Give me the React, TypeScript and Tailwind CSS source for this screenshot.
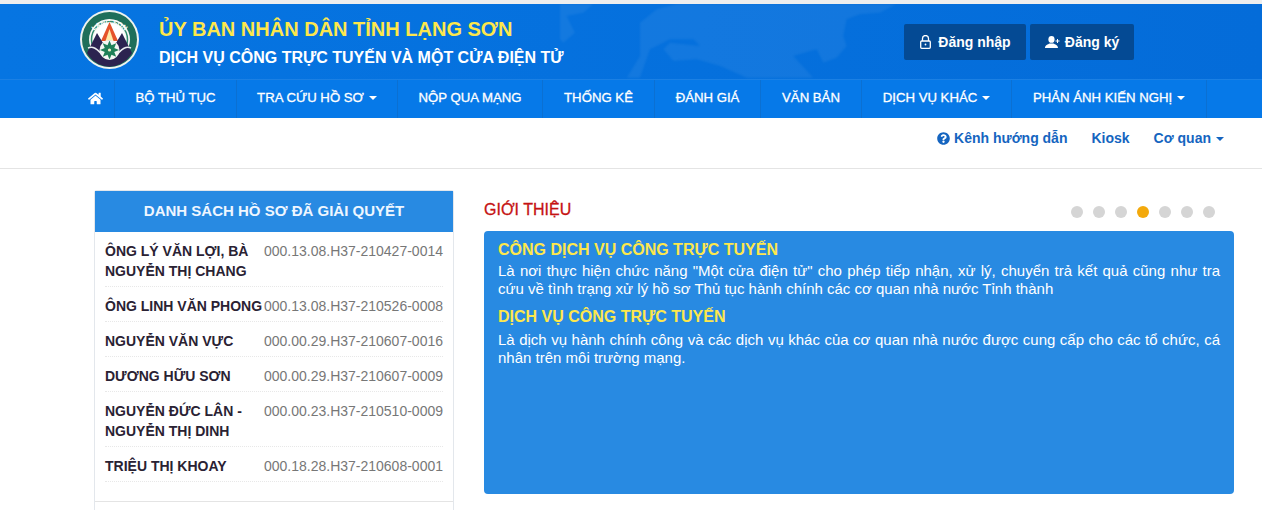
import { FaHome, FaQuestionCircle } from "react-icons/fa";

const navItems = [
  { label: "BỘ THỦ TỤC", w: "w-[122px]" },
  { label: "TRA CỨU HỒ SƠ", caret: true, w: "w-[161px]" },
  { label: "NỘP QUA MẠNG", w: "w-[145px]" },
  { label: "THỐNG KÊ", w: "w-[112px]" },
  { label: "ĐÁNH GIÁ", w: "w-[106px]" },
  { label: "VĂN BẢN", w: "w-[101px]" },
  { label: "DỊCH VỤ KHÁC", caret: true, w: "w-[150px]" },
  { label: "PHẢN ÁNH KIẾN NGHỊ", caret: true, w: "w-[195px]" },
];

const records = [
  { name: "ÔNG LÝ VĂN LỢI, BÀ NGUYỄN THỊ CHANG", code: "000.13.08.H37-210427-0014", h: "h-[55px]" },
  { name: "ÔNG LINH VĂN PHONG", code: "000.13.08.H37-210526-0008", h: "h-[35px]" },
  { name: "NGUYỄN VĂN VỰC", code: "000.00.29.H37-210607-0016", h: "h-[35px]" },
  { name: "DƯƠNG HỮU SƠN", code: "000.00.29.H37-210607-0009", h: "h-[35px]" },
  { name: "NGUYỄN ĐỨC LÂN - NGUYỄN THỊ DINH", code: "000.00.23.H37-210510-0009", h: "h-[55px]" },
  { name: "TRIỆU THỊ KHOAY", code: "000.18.28.H37-210608-0001", h: "h-[35px]" },
];

const Caret = () => (
  <span className="ml-[5px] inline-block h-0 w-0 border-x-[4px] border-t-[4px] border-x-transparent border-t-current align-middle" />
);

const petals = [0, 45, 90, 135, 180, 225, 270, 315];

const Logo = () => (
  <svg viewBox="0 0 59 59" className="h-[59px] w-[59px] shrink-0">
    <circle cx="29.5" cy="29.5" r="29.5" fill="#eef3ef" />
    <circle cx="29.5" cy="29.5" r="27.5" fill="#1f6f5a" />
    <circle cx="29.5" cy="29.5" r="20.5" fill="#f5f7f4" />
    <circle cx="29.5" cy="29.5" r="18" fill="none" stroke="#2f8a6c" strokeWidth="1.5" />
    <circle cx="29.5" cy="29.5" r="16" fill="#ffffff" />
    <path id="logoArc" d="M7.5 33A22.3 22.3 0 0 1 51.5 33" fill="none" />
    <text fontFamily="'Liberation Sans', sans-serif" fontSize="6.5" fontWeight="700" fill="#ffffff">
      <textPath href="#logoArc" startOffset="50%" textAnchor="middle">LANG SON</textPath>
    </text>
    <path d="M29.5 12L38 31H21Z" fill="#e5522a" />
    <path d="M29.5 19L33.5 31H25.5Z" fill="#ffe9a8" />
    <path d="M7 43L17 23L23 33L29.5 30L36 33L42 23L52 43L50 46A25 25 0 0 1 9 46Z" fill="#2c2350" />
    <path d="M8 38C15 35 19 42 24 46M51 38C44 35 40 42 35 46" fill="none" stroke="#e8ecef" strokeWidth="1.6" />
    <circle cx="29.5" cy="40" r="10" fill="#f5f7f4" />
    <g fill="#1f7f58">
      {petals.map((deg) => (
        <path key={deg} d="M29.5 30.5L32 36.5L29.5 40L27 36.5Z" transform={`rotate(${deg} 29.5 40)`} />
      ))}
    </g>
    <circle cx="29.5" cy="40" r="1.6" fill="#f3f0c8" />
  </svg>
);

const WorldMap = () => (
  <svg viewBox="0 14 1080 222" className="absolute left-[560px] top-0 h-[74px] w-[360px] blur-[1px]" fill="#ffffff" fillOpacity="0.06">
    <path d="M0 14L100 14L70 40L20 50L45 100L10 130L0 120Z" />
    <path d="M240 70L290 30L350 14L1010 14L960 40L900 45L860 60L850 110L860 140L830 175L790 190L770 150L700 170L760 235L560 235L480 200L410 180L340 185L310 150L330 130L420 140L400 120L330 120L290 140L270 150L240 235L200 235L240 170Z" />
  </svg>
);

export default function App() {
  return (
    <div className="h-[518px] w-[1262px] overflow-hidden bg-white font-['Liberation_Sans',Arial,sans-serif]">
      <header className="relative h-[79px] border-t-[4px] border-[#eeeeee] bg-[linear-gradient(90deg,#0675e2,#046cd9)]">
        <WorldMap />
        <div className="relative flex items-start pl-[80px] pt-[6px]">
          <Logo />
          <div className="ml-[20px] pt-[5px]">
            <h1 className="text-[20px] font-bold leading-[28px] text-[#fde74c]">ỦY BAN NHÂN DÂN TỈNH LẠNG SƠN</h1>
            <p className="mt-[3px] text-[16px] font-bold leading-[24px] text-white">DỊCH VỤ CÔNG TRỰC TUYẾN VÀ MỘT CỬA ĐIỆN TỬ</p>
          </div>
          <div className="absolute left-[904px] top-[20px] flex gap-[4px]">
            <button className="flex h-[36px] w-[122px] items-center justify-center gap-[7px] rounded-[2px] bg-[#044a94] pl-[1px] text-[14px] font-bold text-white">
              <svg viewBox="0 0 11 14" className="h-[14px] w-[11px]" fill="none" stroke="currentColor" strokeWidth="1.3">
                <path d="M2.5 6V3.5A3 3 0 0 1 8.5 3.5V6" />
                <rect x="0.7" y="6" width="9.6" height="7.3" rx="1" />
                <circle cx="5.5" cy="9.5" r="0.9" fill="currentColor" stroke="none" />
              </svg>
              Đăng nhập
            </button>
            <button className="flex h-[36px] w-[104px] items-center justify-center gap-[5px] rounded-[2px] bg-[#044a94] text-[14px] font-bold text-white">
              <svg viewBox="0 0 15 12" className="h-[12px] w-[15px]" fill="currentColor">
                <ellipse cx="6.5" cy="3.4" rx="3.1" ry="3.4" />
                <path d="M0 12C0 9 3 8.4 4.6 7.4H8.4C10 8.4 13 9 13 12Z" />
                <path d="M12 3H13V4.5H14.5V5.5H13V7H12V5.5H10.5V4.5H12Z" />
              </svg>
              Đăng ký
            </button>
          </div>
        </div>
      </header>

      <nav className="flex h-[39px] items-stretch border-t border-[#1b80e4] bg-[#0679e8] pl-[77px] text-white">
        <a className="flex w-[38px] items-center justify-center border-r border-[#0b70d2] pb-[2px]">
          <FaHome size={15} />
        </a>
        {navItems.map((item) => (
          <a
            key={item.label}
            className={`flex items-center justify-center whitespace-nowrap border-r border-[#0b70d2] pb-[2px] text-[13.2px] [-webkit-text-stroke:0.3px] ${item.w}`}
          >
            {item.label}
            {item.caret && <Caret />}
          </a>
        ))}
      </nav>

      <div className="flex h-[51px] items-center justify-end border-b border-[#e4e4e4] pb-[10px] pr-[38px] text-[14px] font-bold text-[#1565c0]">
        <a className="flex items-center gap-[4px]">
          <FaQuestionCircle size={13} />
          Kênh hướng dẫn
        </a>
        <a className="ml-[24px]">Kiosk</a>
        <a className="ml-[24px]">
          Cơ quan
          <Caret />
        </a>
      </div>

      <main className="flex items-start pl-[94px] pt-[21px]">
        <section className="h-[320px] w-[360px] rounded-t-[3px] border-x border-t border-[#e3e7ec]">
          <h2 className="flex h-[41px] items-center justify-center bg-[#288ae2] text-[15px] font-bold text-[#eef6ff]">
            DANH SÁCH HỒ SƠ ĐÃ GIẢI QUYẾT
          </h2>
          <ul className="px-[10px]">
            {records.map((r) => (
              <li key={r.code} className={`flex items-start justify-between border-b border-dotted border-[#e8e8e8] pt-[9px] ${r.h}`}>
                <span className="w-[158px] text-[14px] font-bold leading-[20px] text-[#2a2233]">{r.name}</span>
                <span className="whitespace-nowrap text-[14px] leading-[20px] text-[#777777]">{r.code}</span>
              </li>
            ))}
          </ul>
          <div className="mt-[19px] border-t border-[#e4e4e4]" />
        </section>

        <section className="ml-[30px] w-[750px]">
          <div className="flex h-[41px] items-center justify-between pb-[1px]">
            <h2 className="text-[16px] text-[#c51212] [-webkit-text-stroke:0.3px]">GIỚI THIỆU</h2>
            <div className="mr-[19px] mt-[4px] flex gap-[10px]">
              {[0, 1, 2, 3, 4, 5, 6].map((i) => (
                <span key={i} className={i === 3 ? "h-[12px] w-[12px] rounded-full bg-[#f3a90c]" : "h-[12px] w-[12px] rounded-full bg-[#d5d5d5]"} />
              ))}
            </div>
          </div>
          <div className="h-[263px] rounded-[4px] bg-[#288ae2] px-[14px] pt-[9px] text-white">
            <h3 className="text-[16px] font-bold leading-[20px] text-[#fde74c]">CÔNG DỊCH VỤ CÔNG TRỰC TUYẾN</h3>
            <p className="mt-[2px] text-justify text-[15px] leading-[18px]">
              Là nơi thực hiện chức năng "Một cửa điện tử" cho phép tiếp nhận, xử lý, chuyển trả kết quả cũng như tra cứu về tình trạng xử lý hồ sơ Thủ tục hành chính các cơ quan nhà nước Tỉnh thành
            </p>
            <h3 className="mt-[9px] text-[16px] font-bold leading-[20px] text-[#fde74c]">DỊCH VỤ CÔNG TRỰC TUYẾN</h3>
            <p className="mt-[4px] text-justify text-[15px] leading-[18px]">
              Là dịch vụ hành chính công và các dịch vụ khác của cơ quan nhà nước được cung cấp cho các tổ chức, cá nhân trên môi trường mạng.
            </p>
          </div>
        </section>
      </main>
    </div>
  );
}
